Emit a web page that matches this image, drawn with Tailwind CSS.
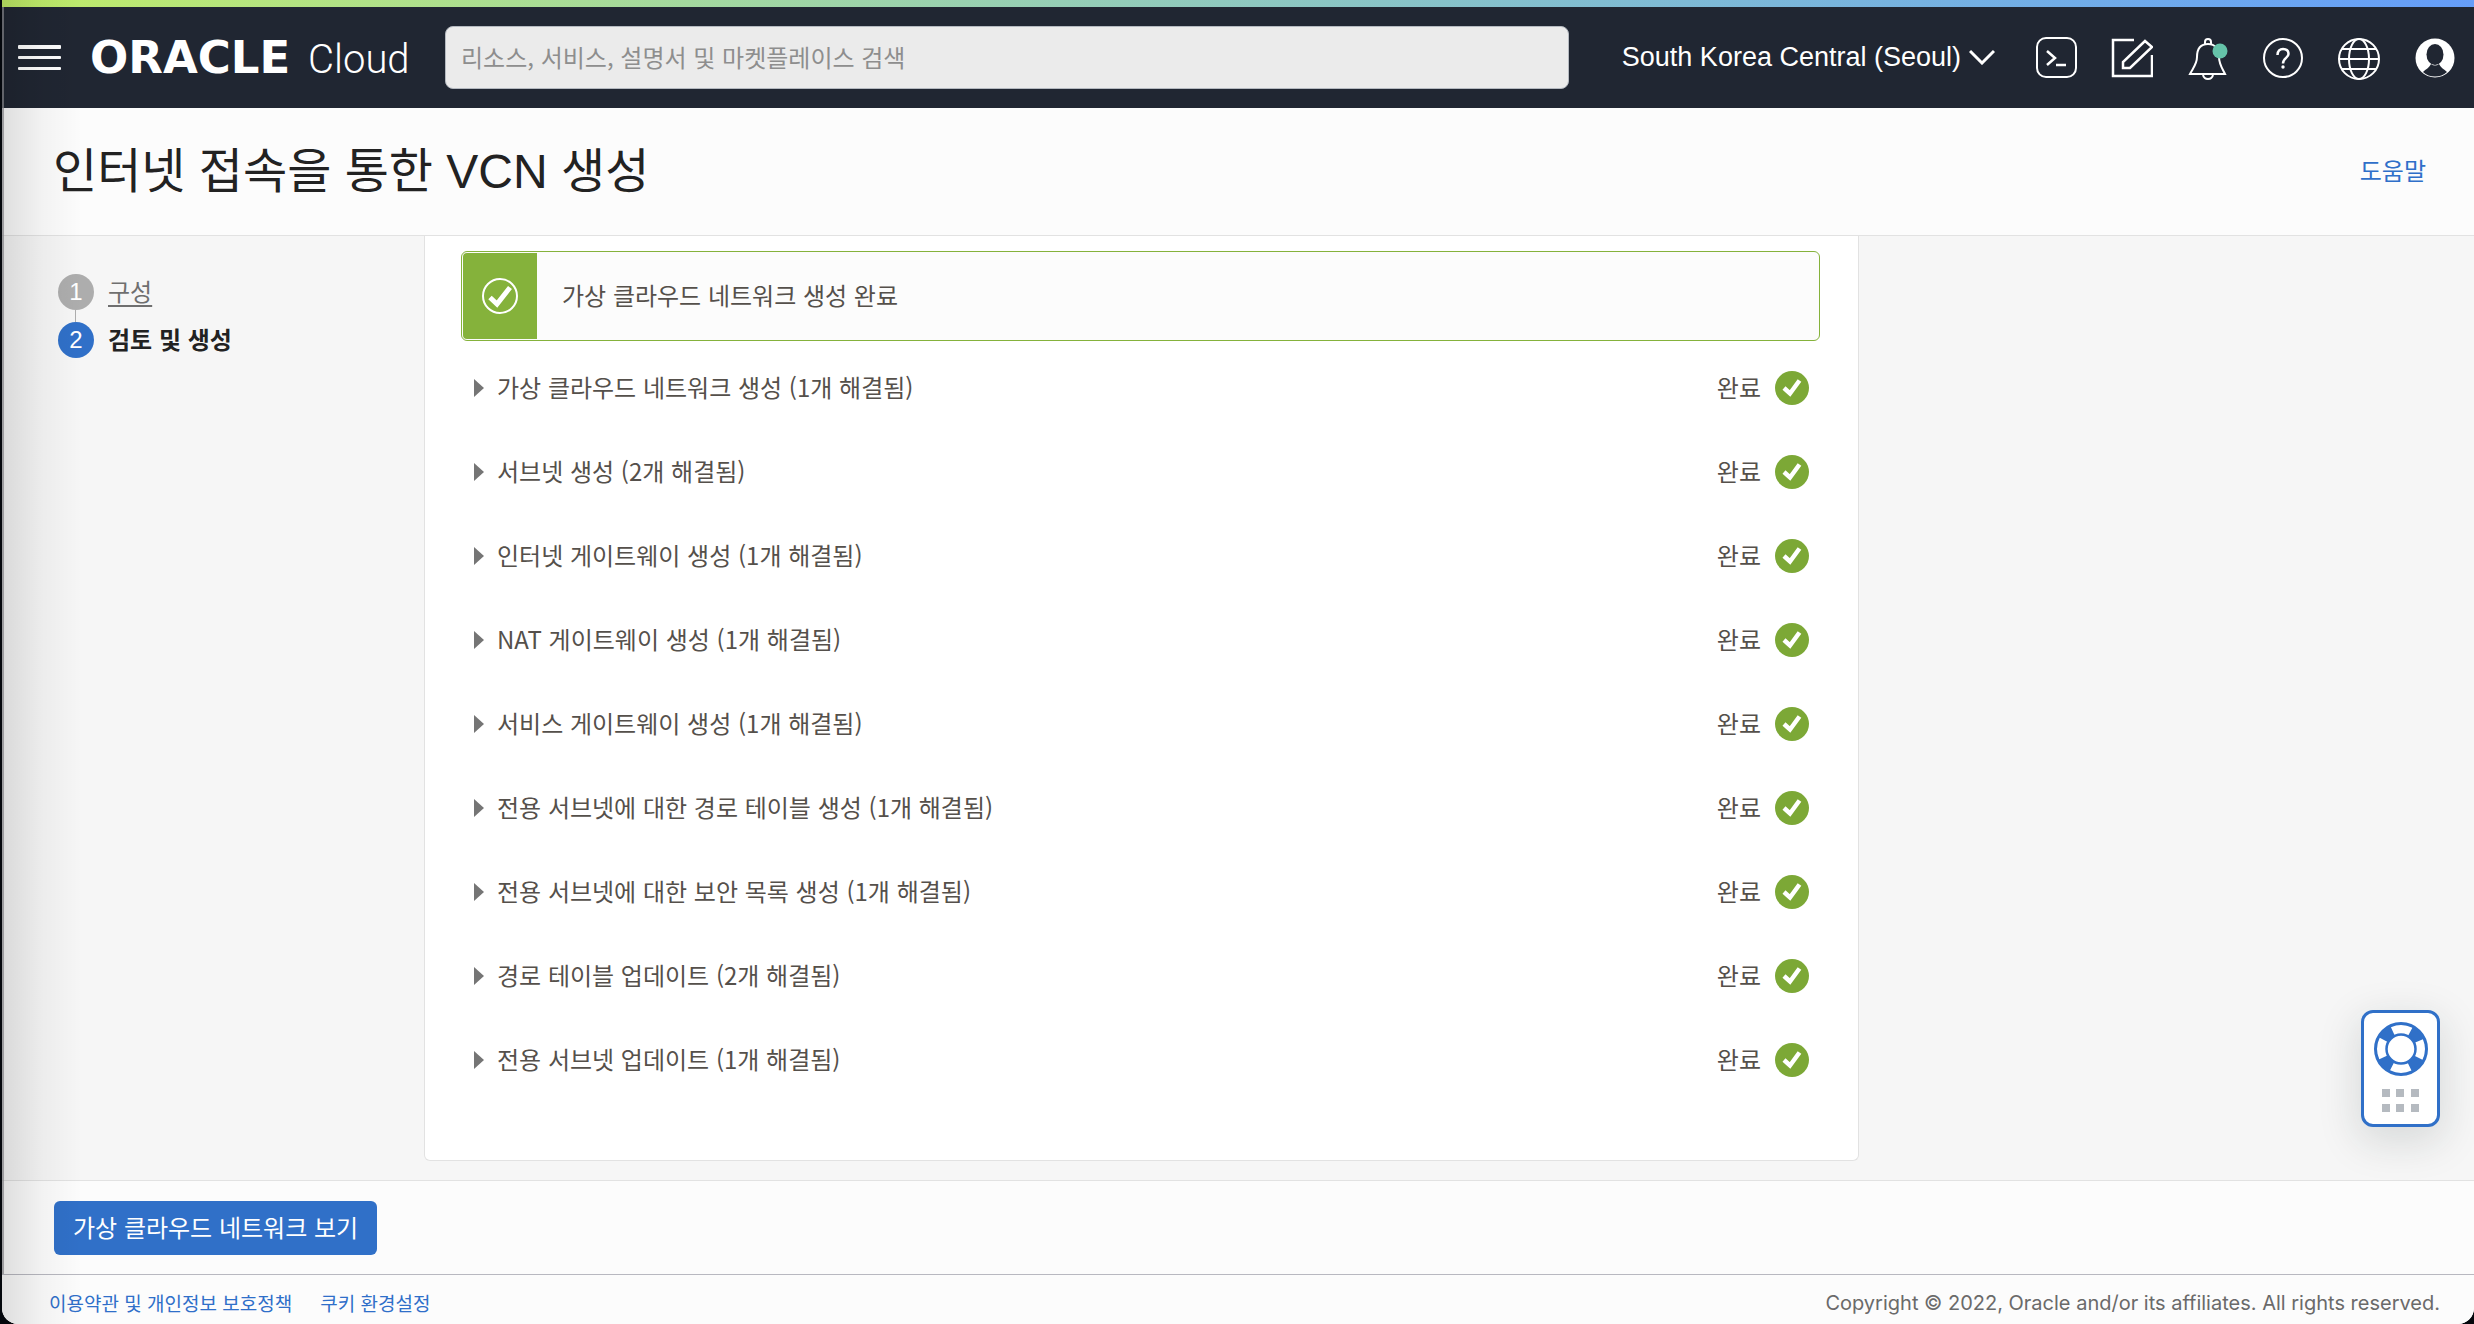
<!DOCTYPE html>
<html lang="ko">
<head>
<meta charset="utf-8">
<title>인터넷 접속을 통한 VCN 생성</title>
<script src="https://cdn.jsdelivr.net/npm/@tailwindcss/browser@4"></script>
</head>
<body class="bg-[#04070c] font-['Noto_Sans_CJK_KR',sans-serif] text-2xl text-[#55504b]">
<div class="relative ml-[2px] flex min-h-screen flex-col overflow-hidden rounded-b-2xl bg-[#f6f6f6]">

  <div class="h-[7px] bg-linear-to-r from-[#c0ec66] to-[#659df9]"></div>
  <header class="flex h-[101px] items-center bg-[#202632] pr-[17px] text-white">
    <div class="flex w-[443px] shrink-0 items-center pl-4">
      <button type="button" aria-label="메뉴" class="mr-[29px]">
        <svg class="block" width="43" height="26" fill="#fff"><rect y="0" width="43" height="4" rx="1"/><rect y="11" width="43" height="3" rx="1"/><rect y="22" width="43" height="3" rx="1"/></svg>
      </button>
      <a href="#" class="flex items-baseline gap-3 leading-none">
        <span class="w-[206px] font-['DejaVu_Sans',sans-serif] text-[45px] font-bold">ORACLE</span>
        <span class="font-['Roboto',sans-serif] text-[40px] font-light">Cloud</span>
      </a>
    </div>
    <input type="search" aria-label="검색" placeholder="리소스, 서비스, 설명서 및 마켓플레이스 검색" class="h-[63px] min-w-0 flex-1 rounded-lg border border-[#b4b9c0] bg-[#ebebeb] px-[15px] pb-[2px] placeholder:text-[#8e8e8e]">
    <button type="button" class="ml-[53px] flex shrink-0 items-center gap-2 font-['Liberation_Sans',sans-serif] text-[27px]">
      South Korea Central (Seoul)
      <svg width="26" height="16" fill="none" stroke="#fff" stroke-width="3"><path d="M1 2 13 14 25 2"/></svg>
    </button>
    <nav class="ml-[38px] flex shrink-0 items-center gap-8">
      <button type="button" aria-label="Cloud Shell"><svg class="block" width="44" height="44" fill="none" stroke="#fff" stroke-width="2"><rect x="4" y="2" width="39" height="39" rx="9"/><path d="M14 15 22 22 14 29M23 29H33" stroke-width="2.5"/></svg></button>
      <button type="button" aria-label="편집"><svg class="block" width="44" height="44" fill="none" stroke="#fff" stroke-width="2.5"><path d="M25 4H4V40H43V19"/><path d="M36 5 43 11 21 32H14V26Z"/></svg></button>
      <button type="button" aria-label="알림"><svg class="block" width="44" height="44" fill="none" stroke="#fff" stroke-width="2"><path d="M20 8V6Q20 3 23 3T26 6V8M5 38C8 32 12 28 12 21C12 12 16 8 23 8C30 8 34 13 34 21C34 28 37 32 40 38Z"/><path d="M18 39Q19 43 23 43T28 39"/><circle cx="35" cy="15" r="7.500" fill="#65c3a9" stroke="none"/></svg></button>
      <button type="button" aria-label="도움말 메뉴"><svg class="block" width="44" height="44" fill="none" stroke="#fff" stroke-width="2"><circle cx="22" cy="22" r="19"/><path d="M16.500 19C16.500 15 19 13 22 13C25.500 13 27.500 15 27.500 18C27.500 22 22 22 22 27.500" stroke-width="2.500"/><circle cx="22" cy="31" r="1.700" fill="#fff" stroke="none"/></svg></button>
      <button type="button" aria-label="언어"><svg class="block" width="44" height="44" fill="none" stroke="#fff" stroke-width="2"><circle cx="22" cy="23" r="20"/><ellipse cx="22" cy="23" rx="10" ry="20"/><path d="M5 13H39M2 23H42M5 33H39"/></svg></button>
      <button type="button" aria-label="프로파일"><svg class="block" width="44" height="44"><circle cx="22" cy="22" r="19.500" fill="#fff"/><ellipse cx="22" cy="18.500" rx="8.500" ry="10.500" fill="#202632"/><path d="M10 36C13 33 16 32 18 28Q22 31 26 28C28 32 31 33 34 36Q29 40.500 22 40.500T10 36Z" fill="#202632"/></svg></button>
    </nav>
  </header>

  <div class="flex h-32 items-center justify-between border-b border-[#e2e2e2] bg-[#fcfcfc] pr-12 pl-[51px]">
    <h1 class="font-['Liberation_Sans','Noto_Sans_CJK_KR',sans-serif] text-5xl text-[#222]">인터넷 접속을 통한 VCN 생성</h1>
    <a href="#" class="pb-1 text-[#2f6fc9]">도움말</a>
  </div>

  <div class="grid flex-1 grid-cols-[422px_7fr_3fr] pb-[19px]">
    <ol class="pt-[38px] pl-14">
      <li class="flex h-12 items-start gap-[14px] leading-9">
        <span class="relative size-9 shrink-0 rounded-full bg-[#adadad] text-center font-['Liberation_Sans',sans-serif] text-white after:absolute after:top-9 after:left-[17px] after:h-3 after:w-px after:bg-[#adadad]">1</span>
        <a href="#" class="leading-[34px] text-[#6f6f6f] underline underline-offset-4">구성</a>
      </li>
      <li class="flex h-12 items-start gap-[14px] leading-9">
        <span class="size-9 shrink-0 rounded-full bg-[#3070c8] text-center font-['Liberation_Sans',sans-serif] text-white">2</span>
        <strong class="leading-[34px] text-[#222]">검토 및 생성</strong>
      </li>
    </ol>

    <main class="rounded-b-md border border-t-0 border-[#e2e2e2] bg-white pt-[15px] pr-[38px] pb-[57px] pl-9">
      <div role="status" class="flex h-[90px] items-stretch rounded-md border border-[#85b23b] bg-[#fcfcfc]">
        <div class="m-px flex w-[74px] items-center justify-center rounded-l bg-[#85b23b]">
          <svg width="38" height="38" fill="none" stroke="#fff"><circle cx="19" cy="19" r="17" stroke-width="2"/><path d="M9 20.500 16 27 29 10.500" stroke-width="5"/></svg>
        </div>
        <p class="flex items-center pb-[3px] pl-6">가상 클라우드 네트워크 생성 완료</p>
      </div>
      <ul id="steps" class="mt-[5px] pr-[11px] pl-[13px]"></ul>
    </main>
  </div>

  <div class="flex h-[94px] items-center border-t border-[#e2e2e2] bg-[#fcfcfc] pl-[52px]">
    <button type="button" class="h-[54px] rounded-md bg-[#3070c8] px-[19px] pb-[2px] text-white">가상 클라우드 네트워크 보기</button>
  </div>
  <footer class="flex h-[50px] items-center justify-between border-t border-[#b8b8c0] bg-[#fcfcfc] pt-[6px] pr-[34px] pl-[47px]">
    <div class="flex gap-7 text-[19px] text-[#2f6fc9]">
      <a href="#">이용약관 및 개인정보 보호정책</a>
      <a href="#">쿠키 환경설정</a>
    </div>
    <p class="font-['Inter',sans-serif] text-xl text-[#6a6a6a]">Copyright © 2022, Oracle and/or its affiliates. All rights reserved.</p>
  </footer>

  <!-- floating support widget -->
  <button type="button" aria-label="지원" class="absolute right-[34px] bottom-[197px] flex h-[117px] w-[79px] flex-col items-center gap-3 rounded-xl border-3 border-[#3070c8] bg-white pt-2 shadow-[0_12px_40px_4px_rgba(20,40,35,0.13)]">
    <svg width="56" height="56" fill="none" stroke="#3070c8"><circle cx="28" cy="28" r="20" stroke-width="12"/><circle cx="28" cy="28" r="19.500" stroke="#fff" stroke-width="9" stroke-dasharray="18 12.630" stroke-dashoffset="9"/><circle cx="28" cy="28" r="14.500" stroke-width="2.500"/><circle cx="28" cy="28" r="25.700" stroke-width="2.600"/></svg>
    <svg width="37" height="23" fill="#b5bac0"><rect x="0" width="8" height="8"/><rect x="14" width="8" height="8"/><rect x="29" width="8" height="8"/><rect x="0" y="15" width="8" height="8"/><rect x="14" y="15" width="8" height="8"/><rect x="29" y="15" width="8" height="8"/></svg>
  </button>

  <!-- soft shade along the window's left edge -->
  <div class="pointer-events-none absolute top-0 bottom-0 left-0 w-20 bg-linear-to-r from-black/12 via-black/4 to-transparent"></div>
  <div class="pointer-events-none absolute top-[7px] bottom-[50px] left-0 w-[2px] bg-[#808084]/70"></div>
</div>

<template id="step">
  <li class="flex h-[84px] items-center">
    <button type="button" class="flex items-center gap-[13px]">
      <svg width="10" height="18" fill="#757575"><path d="M0 0 10 9 0 18Z"/></svg>
      <span class="pb-[2px]" data-name></span>
    </button>
    <span class="mr-[14px] ml-auto pb-[2px]">완료</span>
    <svg width="34" height="34" fill="none"><circle cx="17" cy="17" r="17" fill="#7ca836"/><path d="M9 17 15 22.500 24.500 9.500" stroke="#fff" stroke-width="4.500"/></svg>
  </li>
</template>
<script>
  const names = [
    '가상 클라우드 네트워크 생성 (1개 해결됨)',
    '서브넷 생성 (2개 해결됨)',
    '인터넷 게이트웨이 생성 (1개 해결됨)',
    'NAT 게이트웨이 생성 (1개 해결됨)',
    '서비스 게이트웨이 생성 (1개 해결됨)',
    '전용 서브넷에 대한 경로 테이블 생성 (1개 해결됨)',
    '전용 서브넷에 대한 보안 목록 생성 (1개 해결됨)',
    '경로 테이블 업데이트 (2개 해결됨)',
    '전용 서브넷 업데이트 (1개 해결됨)'
  ];
  const list = document.getElementById('steps');
  const tpl = document.getElementById('step');
  for (const name of names) {
    const row = tpl.content.cloneNode(true);
    row.querySelector('[data-name]').textContent = name;
    list.append(row);
  }
</script>
</body>
</html>
